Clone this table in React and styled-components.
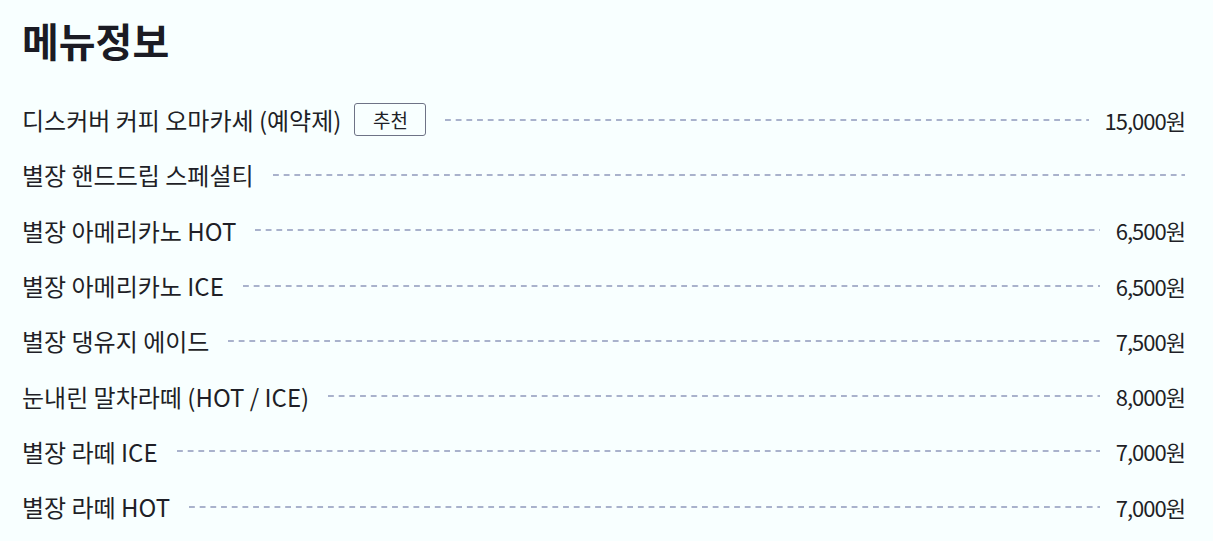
import styled, { createGlobalStyle } from "styled-components";

const GlobalStyle = createGlobalStyle`
  html, body {
    margin: 0;
    padding: 0;
    background: #f8ffff;
  }
  body {
    font-family: "Noto Sans CJK KR", "Noto Sans", sans-serif;
    color: #1f1f27;
  }
`;

const Section = styled.section`
  padding: 13px 28px 0 22px;
`;

const Title = styled.h2`
  margin: 0;
  font-size: 40px;
  line-height: 54px;
  font-weight: 700;
  letter-spacing: 0;
  color: #1b1b24;
`;

const MenuList = styled.ul`
  list-style: none;
  margin: 25px 0 0;
  padding: 0;
`;

const MenuRow = styled.li`
  display: flex;
  align-items: center;
  height: 55.3px;
`;

const MenuName = styled.span`
  font-size: 24px;
  letter-spacing: 0;
  white-space: nowrap;
  color: #1f1f27;
`;

const Badge = styled.span`
  display: inline-flex;
  align-items: center;
  justify-content: center;
  box-sizing: border-box;
  width: 72px;
  height: 33px;
  margin-left: 13px;
  border: 1.5px solid #6e7386;
  border-radius: 3px;
  font-size: 19px;
  color: #1f1f27;
`;

const Leader = styled.span`
  flex: 1;
  height: 2px;
  margin: 0 ${(p) => (p.$last ? "0" : "16px")} 0 19px;
  background-image: linear-gradient(to right, #a9b2cc 55%, transparent 55%);
  background-size: 10.7px 2px;
  background-repeat: repeat-x;
`;

const Price = styled.span`
  font-size: 22px;
  letter-spacing: -1px;
  white-space: nowrap;
  color: #1f1f27;
`;

const menu = [
  { name: "디스커버 커피 오마카세 (예약제)", badge: "추천", price: "15,000원" },
  { name: "별장 핸드드립 스페셜티" },
  { name: "별장 아메리카노 HOT", price: "6,500원" },
  { name: "별장 아메리카노 ICE", price: "6,500원" },
  { name: "별장 댕유지 에이드", price: "7,500원" },
  { name: "눈내린 말차라떼 (HOT / ICE)", price: "8,000원" },
  { name: "별장 라떼 ICE", price: "7,000원" },
  { name: "별장 라떼 HOT", price: "7,000원" },
];

export default function App() {
  return (
    <Section>
      <GlobalStyle />
      <Title>메뉴정보</Title>
      <MenuList>
        {menu.map((item) => (
          <MenuRow key={item.name}>
            <MenuName>{item.name}</MenuName>
            {item.badge && <Badge>{item.badge}</Badge>}
            <Leader $last={!item.price} />
            {item.price && <Price>{item.price}</Price>}
          </MenuRow>
        ))}
      </MenuList>
    </Section>
  );
}
